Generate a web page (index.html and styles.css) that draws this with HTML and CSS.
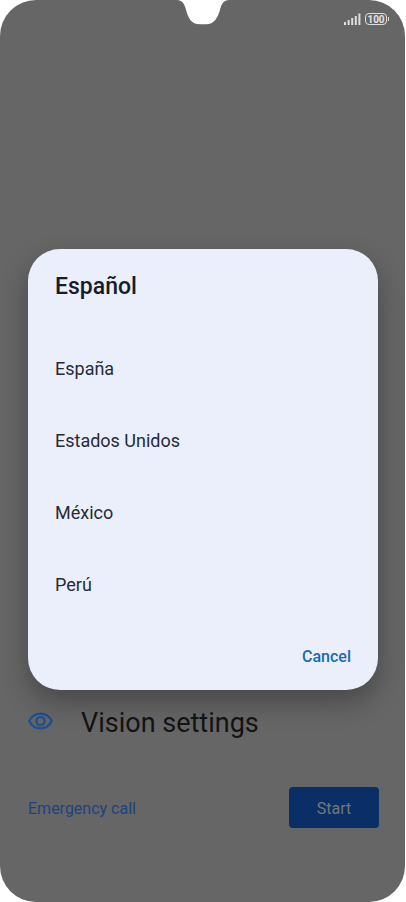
FILE: index.html
```html
<!DOCTYPE html>
<html lang="en">
<head>
<meta charset="utf-8">
<meta name="viewport" content="width=device-width, initial-scale=1">
<title>Language</title>
<link rel="stylesheet" href="styles.css">
</head>
<body>
<div class="screen">
  <svg class="notch" viewBox="0 0 52 25" aria-hidden="true"><path d="M0 0C5 0.500 7 3 8.500 8C11 18 14 24.300 23 24.300H29C37 24.300 41 18 43.500 8C45 3 47 0.500 52 0Z" fill="#fff"/></svg>
  <header class="status">
    <svg class="signal" viewBox="0 0 17 12" aria-label="Signal"><path d="M0 9h2v3H0zM3.600 7h2v5h-2zM7.200 5h2v7h-2zM10.800 3h2v9h-2zM14.400 0.500h2v11.500h-2z" fill="#dedede"/></svg>
    <span class="battery">100</span>
  </header>
  <main class="setup">
    <a class="vision" href="#vision">
      <svg class="eye" viewBox="0 0 26 18" aria-hidden="true"><g fill="none" stroke="#1f4f94" stroke-width="2.400"><path d="M1.300 9C3.600 4.200 7.800 1.300 13 1.300S22.400 4.200 24.700 9C22.400 13.800 18.200 16.700 13 16.700S3.600 13.800 1.300 9Z"/><circle cx="13" cy="9" r="4.300"/></g></svg>
      <span>Vision settings</span>
    </a>
    <div class="actions">
      <a class="emergency" href="#emergency">Emergency call</a>
      <button class="start" type="button">Start</button>
    </div>
  </main>
  <div class="overlay">
    <section class="dialog" role="dialog" aria-labelledby="dialog-title">
      <h1 class="title" id="dialog-title">Español</h1>
      <div class="options">
        <button class="option" type="button">España</button>
        <button class="option" type="button">Estados Unidos</button>
        <button class="option" type="button">México</button>
        <button class="option" type="button">Perú</button>
      </div>
      <button class="cancel" type="button">Cancel</button>
    </section>
  </div>
</div>
</body>
</html>
```
FILE: styles.css
```css
* {
  box-sizing: border-box;
}

body {
  margin: 0;
  padding-right: 1px;
  background: #fff;
  font-family: Roboto, "Liberation Sans", sans-serif;
}

button {
  border: 0;
  padding: 0;
  background: none;
  font: inherit;
  cursor: pointer;
}

a {
  text-decoration: none;
}

.screen {
  position: relative;
  display: flex;
  flex-direction: column;
  min-height: 100vh;
  border-radius: 36px;
  background: #666;
  overflow: hidden;
}

.notch {
  position: absolute;
  top: 0;
  left: 50%;
  width: 52px;
  margin-left: -26px;
}

.status {
  display: flex;
  justify-content: flex-end;
  align-items: center;
  gap: 4px;
  padding: 13px 18px 0;
}

.signal {
  width: 17px;
  height: 12px;
}

.battery {
  position: relative;
  width: 22px;
  height: 12px;
  border: 1px solid #dedede;
  border-radius: 4px;
  color: #e4e4e4;
  font-size: 10px;
  font-weight: 700;
  line-height: 11px;
  text-align: center;
}

.battery::after {
  content: "";
  position: absolute;
  top: 3px;
  right: -3px;
  width: 1px;
  height: 4px;
  background: #dedede;
}

.setup {
  margin-top: auto;
  padding: 0 26px 74px 28px;
}

.vision {
  display: flex;
  align-items: center;
  gap: 28px;
  color: #141414;
  font-size: 27px;
  line-height: 36px;
}

.eye {
  width: 25px;
  height: 18px;
  margin-bottom: 4px;
}

.actions {
  display: flex;
  justify-content: space-between;
  align-items: center;
  margin-top: 46px;
}

.emergency {
  padding-top: 2px;
  color: #1c4480;
  font-size: 16px;
}

.start {
  width: 90px;
  height: 41px;
  padding-top: 2px;
  border-radius: 4px;
  background: #0a2f66;
  color: #73777e;
  font-size: 16px;
}

.overlay {
  position: absolute;
  inset: 0;
  display: flex;
  align-items: center;
  padding: 37px 27px 0 28px;
}

.dialog {
  display: flex;
  flex-direction: column;
  flex: 1;
  padding: 22px 27px 18px;
  border-radius: 32px;
  background: #ebeffc;
  box-shadow: 0 12px 28px rgba(0, 0, 0, 0.3);
}

.title {
  margin: 0 0 29px;
  color: #171c28;
  font-size: 23px;
  font-weight: 500;
  line-height: 32px;
}

.options {
  display: flex;
  flex-direction: column;
}

.option {
  height: 72px;
  color: #262b35;
  font-size: 18px;
  text-align: left;
}

.cancel {
  align-self: flex-end;
  height: 32px;
  margin-top: 20px;
  color: #176bb0;
  font-size: 16px;
  font-weight: 500;
}
```
